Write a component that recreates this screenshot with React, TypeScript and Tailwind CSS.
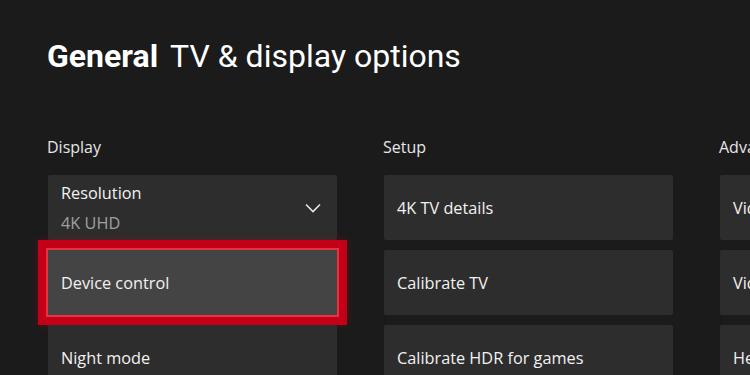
import React from "react";

type Item = {
  label: string;
  value?: string;
  dropdown?: boolean;
  focused?: boolean;
};

const columns: { title: string; items: Item[] }[] = [
  {
    title: "Display",
    items: [
      { label: "Resolution", value: "4K UHD", dropdown: true },
      { label: "Device control", focused: true },
      { label: "Night mode" }
    ]
  },
  {
    title: "Setup",
    items: [{ label: "4K TV details" }, { label: "Calibrate TV" }, { label: "Calibrate HDR for games" }]
  },
  {
    title: "Advanced",
    items: [{ label: "Video fidelity & overscan" }, { label: "Video modes" }, { label: "Help" }]
  }
];

export default function App() {
  return (
    <div
      className="h-[375px] w-[750px] overflow-hidden bg-[#1b1b1b] pl-[48px] pt-[37px] text-white"
      style={{ fontFamily: '"Open Sans", "Noto Sans", sans-serif' }}
    >
      <h1
        className="-ml-px flex items-baseline gap-[12px] text-[32px] leading-[38px]"
        style={{ fontFamily: 'Roboto, "Liberation Sans", sans-serif' }}
      >
        <span className="font-bold">General</span>
        <span className="font-normal">TV &amp; display options</span>
      </h1>

      <div className="mt-[62px] flex gap-[47px]">
        {columns.map((col) => (
          <section key={col.title} className="w-[289px] shrink-0">
            <h2 className="-ml-px text-[16px] leading-[20px] text-[#e6e6e6]">{col.title}</h2>
            <div className="mt-[18px] flex flex-col gap-[10px]">
              {col.items.map((item) => (
                <Card key={item.label} item={item} />
              ))}
            </div>
          </section>
        ))}
      </div>
    </div>
  );
}

function Card({ item }: { item: Item }) {
  return (
    <div
      className={
        item.focused
          ? "relative flex h-[65px] items-center bg-[#444444] px-[13px] shadow-[0_0_0_2px_#e5343f,0_0_0_10px_#c40019,0_0_8px_10px_rgba(196,0,25,0.3)]"
          : "relative flex h-[65px] items-center rounded-[2px] bg-[#2d2d2d] px-[13px]"
      }
    >
      {item.value ? (
        <div className="flex flex-col">
          <span className="text-[16.3px] leading-[22px] text-[#f2f2f2]">{item.label}</span>
          <span className="mt-[8px] text-[16.3px] leading-[22px] text-[#a0a0a0]">{item.value}</span>
        </div>
      ) : (
        <span className="text-[16.3px] leading-[22px] text-[#f2f2f2]">{item.label}</span>
      )}
      {item.dropdown ? (
        <svg
          className="absolute right-[16px] top-[28px]"
          width="16"
          height="10"
          viewBox="0 0 16 10"
          fill="none"
          stroke="#e6e6e6"
          strokeWidth="1.6"
        >
          <path d="M1 1.5 L8 8.5 L15 1.5" />
        </svg>
      ) : null}
    </div>
  );
}
